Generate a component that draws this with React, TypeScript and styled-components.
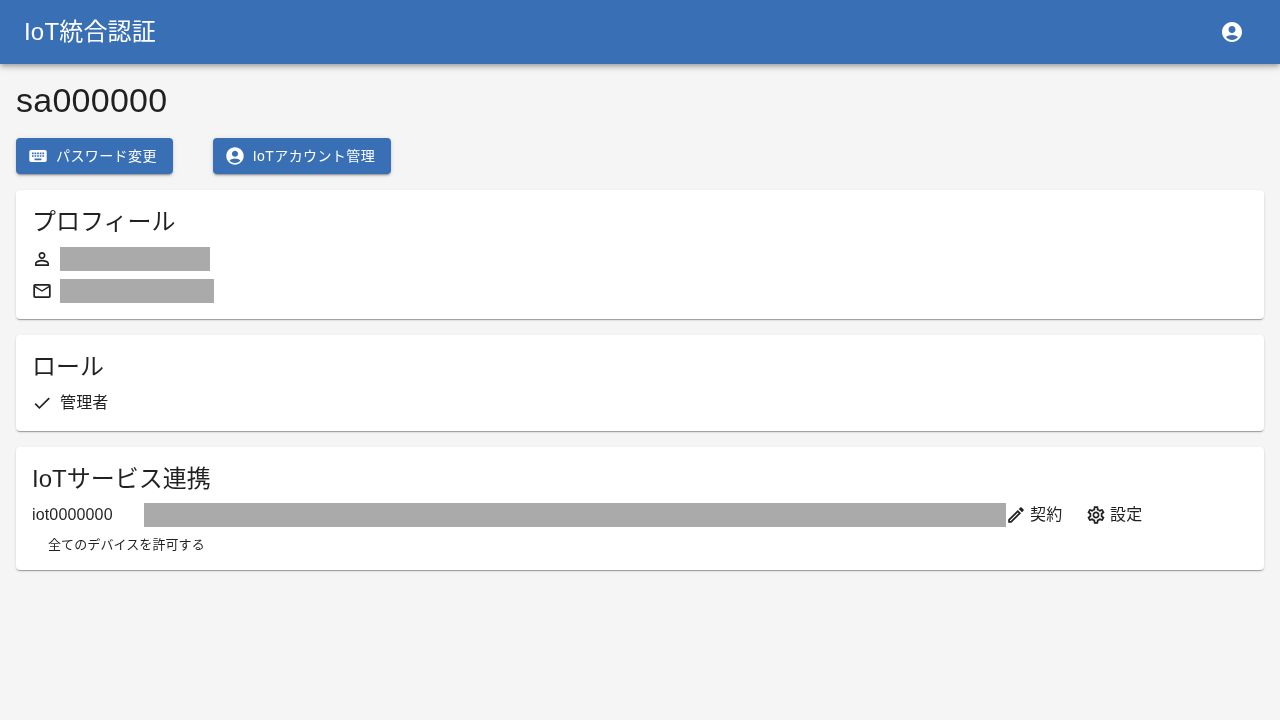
import React from "react";
import styled, { createGlobalStyle } from "styled-components";

const Global = createGlobalStyle`
  html, body { margin: 0; padding: 0; background: #f5f5f5; }
  body { font-family: "Liberation Sans", "Noto Sans CJK JP", sans-serif; font-weight: 400; color: rgba(0,0,0,0.87); }
  * { box-sizing: border-box; }
`;
const Page = styled.div`min-height: 720px; display: flex; flex-direction: column; will-change: transform;`;
const AppBar = styled.header`
  height: 64px; background: #396fb4; color: #fff; display: flex; align-items: center; justify-content: space-between;
  padding: 0 24px; box-shadow: 0 2px 4px -1px rgba(0,0,0,.2), 0 4px 5px rgba(0,0,0,.14), 0 1px 10px rgba(0,0,0,.12);
`;
const Title = styled.div`font-size: 24px; line-height: 32px; letter-spacing: .18px;`;
const AppIcon = styled.span`display: flex; padding: 12px;`;
const Main = styled.main`padding: 16px; display: flex; flex-direction: column; gap: 16px;`;
const Head = styled.div`display: flex; flex-direction: column; gap: 18px;`;
const User = styled.h1`margin: 0; font-size: 34px; font-weight: 400; line-height: 40px; letter-spacing: .25px;`;
const Buttons = styled.div`display: flex; gap: 40px;`;
const Btn = styled.div`
  height: 36px; display: flex; align-items: center; gap: 8px; padding: 0 16px 0 12px; border-radius: 4px; background: #396fb4; color: #fff;
  font-size: 14px; letter-spacing: .4px; box-shadow: 0 3px 1px -2px rgba(0,0,0,.2), 0 2px 2px rgba(0,0,0,.14), 0 1px 5px rgba(0,0,0,.12);
`;
const BtnLabel = styled.span`padding-bottom: 2px;`;
const Card = styled.section`
  background: #fff; border-radius: 4px; padding: 16px; display: flex; flex-direction: column; gap: 8px;
  box-shadow: 0 2px 1px -1px rgba(0,0,0,.2), 0 1px 1px rgba(0,0,0,.14), 0 1px 3px rgba(0,0,0,.12);
`;
const CardTitle = styled.h2`margin: 0; font-size: 24px; font-weight: 400; line-height: 32px;`;
const Rows = styled.div`display: flex; flex-direction: column; gap: 8px; padding-top: 1px;`;
const Row = styled.div`display: flex; align-items: center; height: 24px; font-size: 16px; letter-spacing: .15px; gap: 8px;`;
const Label = styled.span`padding-bottom: 4px;`;
const Mask = styled.div<{ $w: number }>`height: 24px; width: ${p => p.$w}px; background: #aaa;`;
const ServiceId = styled.span`width: 112px; flex: none;`;
const Action = styled.span<{ $w: number }>`display: flex; align-items: center; gap: 4px; width: ${p => p.$w}px;`;
const Small = styled.div`font-size: 13px; letter-spacing: .1px; padding-left: 16px; line-height: 19px;`;
const Svc = styled(Row)`gap: 0;`;
const Svg = styled.svg`width: 20px; height: 20px; flex: none; fill: currentColor;`;
const Svg24 = styled.svg`width: 24px; height: 24px; flex: none; fill: currentColor;`;

const P = ({ d, big }: { d: string; big?: boolean }) => big
  ? <Svg24 viewBox="0 0 24 24"><path d={d} /></Svg24>
  : <Svg viewBox="0.5 0.5 23 23"><path d={d} /></Svg>;
const account = "M12 2C6.48 2 2 6.48 2 12s4.48 10 10 10 10-4.48 10-10S17.52 2 12 2zm0 4c1.93 0 3.5 1.57 3.5 3.5S13.93 13 12 13s-3.5-1.57-3.5-3.5S10.07 6 12 6zm0 14c-2.03 0-4.43-.82-6.14-2.88C7.55 15.8 9.68 15 12 15s4.45.8 6.14 2.12C16.43 19.18 14.03 20 12 20z";
const keyboard = "M20 5H4c-1.1 0-1.99.9-1.99 2L2 17c0 1.1.9 2 2 2h16c1.1 0 2-.9 2-2V7c0-1.1-.9-2-2-2zm-9 3h2v2h-2V8zm0 3h2v2h-2v-2zM8 8h2v2H8V8zm0 3h2v2H8v-2zm-1 2H5v-2h2v2zm0-3H5V8h2v2zm9 7H8v-2h8v2zm0-4h-2v-2h2v2zm0-3h-2V8h2v2zm3 3h-2v-2h2v2zm0-3h-2V8h2v2z";
const person = "M12 5.9c1.16 0 2.1.94 2.1 2.1s-.94 2.1-2.1 2.1S9.9 9.16 9.9 8s.94-2.1 2.1-2.1m0 9c2.97 0 6.1 1.46 6.1 2.1v1.1H5.9V17c0-.64 3.13-2.1 6.1-2.1M12 4C9.79 4 8 5.79 8 8s1.79 4 4 4 4-1.79 4-4-1.79-4-4-4zm0 9c-2.67 0-8 1.34-8 4v3h16v-3c0-2.66-5.33-4-8-4z";
const mail = "M22 6c0-1.1-.9-2-2-2H4c-1.1 0-2 .9-2 2v12c0 1.1.9 2 2 2h16c1.1 0 2-.9 2-2V6zm-2 0l-8 5-8-5h16zm0 12H4V8l8 5 8-5v10z";
const check = "M9 16.17L4.83 12l-1.42 1.41L9 19 21 7l-1.41-1.41z";
const edit = "M14.06 9.02l.92.92L5.92 19H5v-.92l9.06-9.06M17.66 3c-.25 0-.51.1-.7.29l-1.83 1.83 3.75 3.75 1.83-1.83c.39-.39.39-1.02 0-1.41l-2.34-2.34c-.2-.2-.45-.29-.71-.29zm-3.6 3.19L3 17.25V21h3.75L17.81 9.94l-3.75-3.75z";
const gear = "M19.43 12.98c.04-.32.07-.64.07-.98s-.03-.66-.07-.98l2.11-1.65c.19-.15.24-.42.12-.64l-2-3.46c-.12-.22-.39-.3-.61-.22l-2.49 1c-.52-.4-1.08-.73-1.69-.98l-.38-2.65C14.46 2.18 14.25 2 14 2h-4c-.25 0-.46.18-.49.42l-.38 2.65c-.61.25-1.17.59-1.69.98l-2.49-1c-.23-.09-.49 0-.61.22l-2 3.46c-.13.22-.07.49.12.64l2.11 1.65c-.04.32-.07.65-.07.98s.03.66.07.98l-2.11 1.65c-.19.15-.24.42-.12.64l2 3.46c.12.22.39.3.61.22l2.49-1c.52.4 1.08.73 1.69.98l.38 2.65c.03.24.24.42.49.42h4c.25 0 .46-.18.49-.42l.38-2.65c.61-.25 1.17-.59 1.69-.98l2.49 1c.23.09.49 0 .61-.22l2-3.46c.12-.22.07-.49-.12-.64l-2.11-1.65zM17.45 11.27c.04.31.05.52.05.73 0 .21-.02.43-.05.73l-.14 1.13.89.7 1.08.84-.7 1.21-1.27-.51-1.04-.42-.9.68c-.43.32-.84.56-1.25.73l-1.06.43-.16 1.13-.2 1.35h-1.4l-.19-1.35-.16-1.13-1.06-.43c-.43-.18-.83-.41-1.23-.71l-.91-.7-1.06.43-1.27.51-.7-1.21 1.08-.84.89-.7-.14-1.13c-.03-.31-.05-.54-.05-.74s.02-.43.05-.73l.14-1.13-.89-.7-1.08-.84.7-1.21 1.27.51 1.04.42.9-.68c.43-.32.84-.56 1.25-.73l1.06-.43.16-1.13.2-1.35h1.39l.19 1.35.16 1.13 1.06.43c.43.18.83.41 1.23.71l.91.7 1.06-.43 1.27-.51.7 1.21-1.07.85-.89.7.14 1.13zM12 8c-2.21 0-4 1.79-4 4s1.79 4 4 4 4-1.79 4-4-1.79-4-4-4zm0 6c-1.1 0-2-.9-2-2s.9-2 2-2 2 .9 2 2-.9 2-2 2z";

export default function App() {
  return (
    <Page>
      <Global />
      <AppBar>
        <Title>IoT統合認証</Title>
        <AppIcon><P d={account} big /></AppIcon>
      </AppBar>
      <Main>
        <Head>
          <User>sa000000</User>
          <Buttons>
            <Btn><P d={keyboard} /><BtnLabel>パスワード変更</BtnLabel></Btn>
            <Btn><P d={account} /><BtnLabel>IoTアカウント管理</BtnLabel></Btn>
          </Buttons>
        </Head>
        <Card>
          <CardTitle>プロフィール</CardTitle>
          <Rows>
            <Row><P d={person} /><Mask $w={150} /></Row>
            <Row><P d={mail} /><Mask $w={154} /></Row>
          </Rows>
        </Card>
        <Card>
          <CardTitle>ロール</CardTitle>
          <Row><P d={check} /><Label>管理者</Label></Row>
        </Card>
        <Card>
          <CardTitle>IoTサービス連携</CardTitle>
          <Svc>
            <ServiceId>iot0000000</ServiceId>
            <Mask $w={862} />
            <Action $w={80}><P d={edit} /><Label>契約</Label></Action>
            <Action $w={60}><P d={gear} /><Label>設定</Label></Action>
          </Svc>
          <Small>全てのデバイスを許可する</Small>
        </Card>
      </Main>
    </Page>
  );
}
